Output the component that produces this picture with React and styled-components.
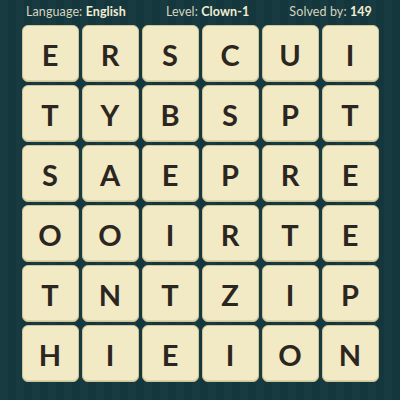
import styled, { createGlobalStyle } from "styled-components";

const GlobalStyle = createGlobalStyle`
  html, body {
    margin: 0;
    padding: 0;
    width: 400px;
    height: 400px;
    overflow: hidden;
  }
  body {
    background: #163940;
    font-family: Lato, "Open Sans", sans-serif;
  }
`;

const Board = styled.div`
  width: 400px;
  height: 400px;
  box-sizing: border-box;
  background-color: #15383f;
  background-image: repeating-linear-gradient(
    90deg,
    rgba(255, 255, 255, 0.012) 0 8px,
    rgba(0, 0, 0, 0.035) 8px 16px
  );
  display: flex;
  flex-direction: column;
  align-items: center;
`;

const InfoBar = styled.div`
  width: 100%;
  height: 25px;
  box-sizing: border-box;
  padding: 0 28px 3px 26px;
  display: flex;
  align-items: center;
  justify-content: space-between;
  font-size: 12.5px;
  letter-spacing: 0.1px;
  color: #d6d4bd;
`;

const Info = styled.span`
  white-space: nowrap;
`;

const Value = styled.b`
  font-weight: 700;
  color: #f1edd2;
`;

const Grid = styled.div`
  display: grid;
  grid-template-columns: repeat(6, 57px);
  grid-auto-rows: 57px;
  gap: 3px;
`;

const Tile = styled.div`
  box-sizing: border-box;
  border-radius: 6px;
  background: #f2eac5;
  border: 1px solid #cdc398;
  box-shadow: inset 0 -1px 0 #ddd3a9;
  display: flex;
  align-items: center;
  justify-content: center;
  font-size: 29px;
  font-weight: 700;
  color: #2b2620;
  line-height: 1;
  padding-top: 1px;
`;

const rows = ["ERSCUI", "TYBSPT", "SAEPRE", "OOIRTE", "TNTZIP", "HIEION"];

export default function App() {
  return (
    <>
      <GlobalStyle />
      <Board>
        <InfoBar>
          <Info>
            Language: <Value>English</Value>
          </Info>
          <Info>
            Level: <Value>Clown-1</Value>
          </Info>
          <Info>
            Solved by: <Value>149</Value>
          </Info>
        </InfoBar>
        <Grid>
          {rows.map((row, r) =>
            row.split("").map((ch, c) => <Tile key={`${r}-${c}`}>{ch}</Tile>)
          )}
        </Grid>
      </Board>
    </>
  );
}
